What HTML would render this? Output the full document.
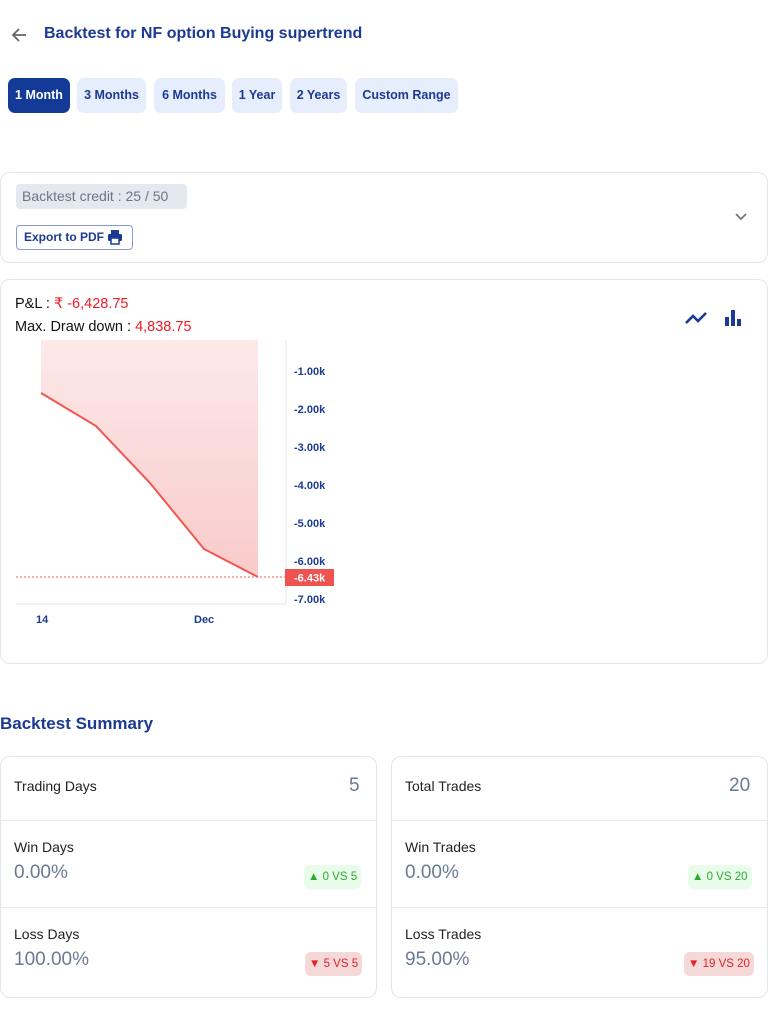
<!DOCTYPE html>
<html><head><meta charset="utf-8"><style>
*{box-sizing:border-box;margin:0;padding:0}
body{width:768px;height:1024px;background:#fff;font-family:"Liberation Sans",sans-serif;position:relative;overflow:hidden;color:#1a1a1a}
.a{position:absolute}
.title{left:44px;top:25px;font-size:16px;font-weight:bold;color:#1c3a94}
.tab{top:78px;height:35px;border-radius:7px;background:#e6edfc;color:#1c3a94;font-size:12.5px;line-height:35px;text-align:center;font-weight:bold}
.card{border:1px solid #e1e6ef;border-radius:10px;background:#fff}
.yl{left:294px;font-size:11px;color:#1c3a94;font-weight:bold}
.lbl{font-size:14px;color:#222}
.pct{font-size:19px;color:#6b7a93}
.badge{height:24px;border-radius:6px;font-size:11.5px;line-height:24px;padding:0 4px}
.g{background:#e9fbe9;color:#2ea836}
.r{background:#f5d8d8;color:#e0202a}
.hr{height:1px;background:#e6eaf1}
</style></head><body>
<svg class="a" style="left:10px;top:27px" width="18" height="16" viewBox="0 0 18 16"><path d="M16 8H3M9 2L3 8l6 6" stroke="#666" stroke-width="1.8" fill="none"/></svg>
<div class="a title">Backtest for NF option Buying supertrend</div>
<div class="a tab" style="left:8px;width:62px;background:#123a96;color:#fff">1 Month</div>
<div class="a tab" style="left:77px;width:69px">3 Months</div>
<div class="a tab" style="left:154px;width:71px">6 Months</div>
<div class="a tab" style="left:232px;width:50px">1 Year</div>
<div class="a tab" style="left:290px;width:57px">2 Years</div>
<div class="a tab" style="left:355px;width:103px">Custom Range</div>

<div class="a card" style="left:0;top:172px;width:768px;height:91px"></div>
<div class="a" style="left:16px;top:184px;width:171px;height:25px;background:#e4e8ef;border-radius:4px;color:#6b7688;font-size:14px;line-height:25px;padding-left:6px">Backtest credit : 25 / 50</div>
<div class="a" style="left:16px;top:225px;width:117px;height:25px;border:1px solid #8b9bd0;border-radius:4px;color:#1c3a94;font-size:12px;font-weight:bold;line-height:23px;padding-left:7px">Export to PDF</div>
<svg class="a" style="left:107px;top:229px" width="16" height="16" viewBox="0 0 16 16"><rect x="4" y="1" width="8" height="4" fill="#1c3a94"/><rect x="1" y="5" width="14" height="7" rx="1.5" fill="#1c3a94"/><rect x="4" y="9" width="8" height="6" fill="#fff" stroke="#1c3a94" stroke-width="1.5"/></svg>
<svg class="a" style="left:734px;top:212px" width="14" height="10"><path d="M2 2l5 5 5-5" stroke="#777" stroke-width="1.8" fill="none"/></svg>

<div class="a card" style="left:0;top:279px;width:768px;height:385px"></div>
<div class="a" style="left:15px;top:296px;font-size:14.5px"><span style="color:#111">P&amp;L : </span><span style="color:#ee1c25">&#8377; -6,428.75</span></div>
<div class="a" style="left:15px;top:319px;font-size:14.5px;color:#111">Max. Draw down : <span style="color:#ee1c25">4,838.75</span></div>
<svg class="a" style="left:684px;top:308px" width="24" height="20"><path d="M2 15l7-7 5 5 8-8" stroke="#1c3a94" stroke-width="2.6" fill="none"/></svg>
<svg class="a" style="left:724px;top:308px" width="20" height="20"><rect x="1" y="9" width="4" height="9" fill="#1c3a94"/><rect x="7" y="2" width="4" height="16" fill="#1c3a94"/><rect x="13" y="11" width="4" height="7" fill="#1c3a94"/></svg>
<svg class="a" style="left:0;top:330px" width="340" height="290">
<defs><linearGradient id="gr" x1="0" y1="0" x2="0" y2="1"><stop offset="0" stop-color="#fde9e9"/><stop offset="1" stop-color="#f9caca"/></linearGradient></defs>
<path d="M41 10H258V247L204 219L150 153L96 96L41 63Z" fill="url(#gr)"/>
<path d="M41 63L96 96L150 153L204 219L258 247" stroke="#f2554f" stroke-width="2" fill="none"/>
<line x1="16" y1="247" x2="286" y2="247" stroke="#f2554f" stroke-dasharray="2,2"/>
<line x1="286" y1="10" x2="286" y2="274" stroke="#e3e6ec"/>
<line x1="16" y1="274" x2="286" y2="274" stroke="#e3e6ec"/>
<rect x="285" y="239" width="49" height="17" fill="#ef5350"/>
<text x="294" y="251.5" fill="#fff" font-size="11" font-weight="bold" font-family="Liberation Sans">-6.43k</text>
</svg>
<div class="a yl" style="top:366px">-1.00k</div>
<div class="a yl" style="top:404px">-2.00k</div>
<div class="a yl" style="top:442px">-3.00k</div>
<div class="a yl" style="top:480px">-4.00k</div>
<div class="a yl" style="top:518px">-5.00k</div>
<div class="a yl" style="top:556px">-6.00k</div>
<div class="a yl" style="top:594px">-7.00k</div>
<div class="a yl" style="left:36px;top:614px">14</div>
<div class="a yl" style="left:194px;top:614px">Dec</div>

<div class="a" style="left:0;top:714px;font-size:17px;font-weight:bold;color:#1c3a94">Backtest Summary</div>

<div class="a card" style="left:0;top:756px;width:377px;height:242px"></div>
<div class="a hr" style="left:1px;top:820px;width:375px"></div>
<div class="a hr" style="left:1px;top:907px;width:375px"></div>
<div class="a lbl" style="left:14px;top:778px">Trading Days</div>
<div class="a pct" style="left:349px;top:775px">5</div>
<div class="a lbl" style="left:14px;top:839px">Win Days</div>
<div class="a pct" style="left:14px;top:862px">0.00%</div>
<div class="a badge g" style="left:304px;top:865px">&#9650; 0 VS 5</div>
<div class="a lbl" style="left:14px;top:926px">Loss Days</div>
<div class="a pct" style="left:14px;top:949px">100.00%</div>
<div class="a badge r" style="left:305px;top:952px">&#9660; 5 VS 5</div>

<div class="a card" style="left:391px;top:756px;width:377px;height:242px"></div>
<div class="a hr" style="left:392px;top:820px;width:375px"></div>
<div class="a hr" style="left:392px;top:907px;width:375px"></div>
<div class="a lbl" style="left:405px;top:778px">Total Trades</div>
<div class="a pct" style="left:729px;top:775px">20</div>
<div class="a lbl" style="left:405px;top:839px">Win Trades</div>
<div class="a pct" style="left:405px;top:862px">0.00%</div>
<div class="a badge g" style="left:688px;top:865px">&#9650; 0 VS 20</div>
<div class="a lbl" style="left:405px;top:926px">Loss Trades</div>
<div class="a pct" style="left:405px;top:949px">95.00%</div>
<div class="a badge r" style="left:684px;top:952px">&#9660; 19 VS 20</div>
</body></html>
